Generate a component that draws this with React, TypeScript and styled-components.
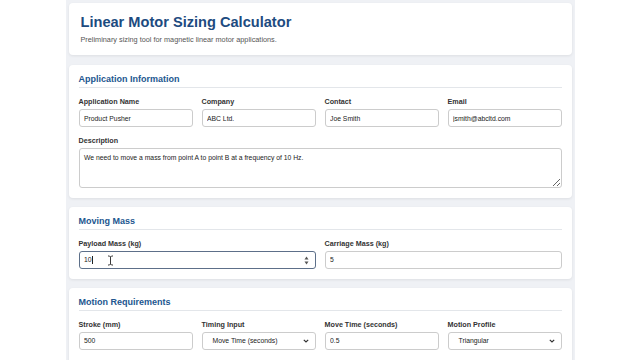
import styled, { createGlobalStyle } from "styled-components";

const GlobalStyle = createGlobalStyle`
  body {
    margin: 0;
    background: #ffffff;
    font-family: "Liberation Sans", Arial, sans-serif;
  }
`;

const Page = styled.div`
  width: 509px;
  min-height: 360px;
  margin: 0 auto;
  padding: 3px 3px 0;
  box-sizing: border-box;
  background: #eff1f5;
  overflow: hidden;
`;

const Card = styled.section`
  background: #ffffff;
  border-radius: 4px;
  box-shadow: 0 1px 3px rgba(0, 0, 0, 0.08);
  padding: 9px 10px 10px;
  margin-bottom: 9px;
`;

const HeaderCard = styled(Card)`
  padding: 11px 12px 11px;
  margin-bottom: 10px;
`;

const Title = styled.h1`
  margin: 0;
  font-size: 14.6px;
  line-height: 17px;
  font-weight: bold;
  color: #1d4b80;
`;

const Subtitle = styled.p`
  margin: 4px 0 0;
  font-size: 7.3px;
  line-height: 9px;
  color: #555;
`;

const SectionTitle = styled.h2`
  margin: 0 0 9px;
  padding-bottom: 2px;
  border-bottom: 1px solid #e3e6ea;
  font-size: 9px;
  line-height: 11px;
  font-weight: bold;
  color: #22568f;
`;

const Grid = styled.div<{ $cols: number }>`
  display: grid;
  grid-template-columns: repeat(${(p) => p.$cols}, 1fr);
  column-gap: 9px;
  row-gap: 8.5px;
`;

const Field = styled.div<{ $span?: number }>`
  display: flex;
  flex-direction: column;
  grid-column: span ${(p) => p.$span ?? 1};
`;

const Label = styled.label`
  margin-bottom: 3px;
  font-size: 7.2px;
  line-height: 9px;
  font-weight: bold;
  color: #333;
`;

const Input = styled.input`
  height: 18px;
  box-sizing: border-box;
  border: 1px solid #cccccc;
  border-radius: 3px;
  padding: 0 4.5px;
  font-family: "Liberation Sans", Arial, sans-serif;
  font-size: 6.8px;
  color: #222;
  background: #fff;
  outline: none;
`;

const TextArea = styled.textarea`
  height: 40px;
  box-sizing: border-box;
  border: 1px solid #cccccc;
  border-radius: 3px;
  padding: 5px 4.5px;
  font-family: "Liberation Sans", Arial, sans-serif;
  font-size: 6.8px;
  color: #222;
  resize: vertical;
  outline: none;
`;

const FocusBox = styled.div`
  position: relative;
  height: 18px;
  box-sizing: border-box;
  border: 1px solid #5d6f89;
  border-radius: 3px;
  padding: 0 4.5px;
  display: flex;
  align-items: center;
  font-size: 6.8px;
  color: #222;
`;

const Caret = styled.span`
  display: inline-block;
  width: 1px;
  height: 8px;
  margin-left: 0.5px;
  background: #222;
`;

const Spinner = styled.svg`
  position: absolute;
  right: 6px;
  top: 4px;
`;

const Cursor = styled.svg`
  position: absolute;
  left: 27px;
  top: 3px;
`;

const SelectBox = styled.div`
  height: 18px;
  box-sizing: border-box;
  border: 1px solid #cccccc;
  border-radius: 3px;
  padding: 0 6px 0 10px;
  display: flex;
  align-items: center;
  justify-content: space-between;
  font-size: 6.8px;
  color: #222;
  background: #fff;
`;

function Chevron() {
  return (
    <svg width="6" height="4" viewBox="0 0 6 4">
      <path d="M0.8 0.8 L3 3 L5.2 0.8" fill="none" stroke="#333" strokeWidth="1.2" />
    </svg>
  );
}

export default function App() {
  return (
    <>
      <GlobalStyle />
      <Page>
        <HeaderCard>
          <Title>Linear Motor Sizing Calculator</Title>
          <Subtitle>Preliminary sizing tool for magnetic linear motor applications.</Subtitle>
        </HeaderCard>

        <Card>
          <SectionTitle>Application Information</SectionTitle>
          <Grid $cols={4}>
            <Field>
              <Label>Application Name</Label>
              <Input readOnly value="Product Pusher" />
            </Field>
            <Field>
              <Label>Company</Label>
              <Input readOnly value="ABC Ltd." />
            </Field>
            <Field>
              <Label>Contact</Label>
              <Input readOnly value="Joe Smith" />
            </Field>
            <Field>
              <Label>Email</Label>
              <Input readOnly value="jsmith@abcltd.com" />
            </Field>
            <Field $span={4}>
              <Label>Description</Label>
              <TextArea
                readOnly
                value="We need to move a mass from point A to point B at a frequency of 10 Hz."
              />
            </Field>
          </Grid>
        </Card>

        <Card>
          <SectionTitle>Moving Mass</SectionTitle>
          <Grid $cols={2}>
            <Field>
              <Label>Payload Mass (kg)</Label>
              <FocusBox>
                10
                <Caret />
                <Cursor width="7" height="11" viewBox="0 0 7 11">
                  <path
                    d="M1 1 H2.5 L3.5 2 L4.5 1 H6 M3.5 2 V9 M1 10 H2.5 L3.5 9 L4.5 10 H6"
                    fill="none"
                    stroke="#fff"
                    strokeWidth="2"
                  />
                  <path
                    d="M1 1 H2.5 L3.5 2 L4.5 1 H6 M3.5 2 V9 M1 10 H2.5 L3.5 9 L4.5 10 H6"
                    fill="none"
                    stroke="#222"
                    strokeWidth="0.9"
                  />
                </Cursor>
                <Spinner width="5" height="9" viewBox="0 0 5 9">
                  <path d="M2.5 0.5 L4.5 3.5 H0.5 Z" fill="#555" />
                  <path d="M2.5 8.5 L4.5 5.5 H0.5 Z" fill="#555" />
                </Spinner>
              </FocusBox>
            </Field>
            <Field>
              <Label>Carriage Mass (kg)</Label>
              <Input readOnly value="5" />
            </Field>
          </Grid>
        </Card>

        <Card>
          <SectionTitle>Motion Requirements</SectionTitle>
          <Grid $cols={4}>
            <Field>
              <Label>Stroke (mm)</Label>
              <Input readOnly value="500" />
            </Field>
            <Field>
              <Label>Timing Input</Label>
              <SelectBox>
                <span>Move Time (seconds)</span>
                <Chevron />
              </SelectBox>
            </Field>
            <Field>
              <Label>Move Time (seconds)</Label>
              <Input readOnly value="0.5" />
            </Field>
            <Field>
              <Label>Motion Profile</Label>
              <SelectBox>
                <span>Triangular</span>
                <Chevron />
              </SelectBox>
            </Field>
            <Field>
              <Label>Maximum Velocity (m/s) (optional)</Label>
              <Input readOnly value="" />
            </Field>
          </Grid>
        </Card>
      </Page>
    </>
  );
}
